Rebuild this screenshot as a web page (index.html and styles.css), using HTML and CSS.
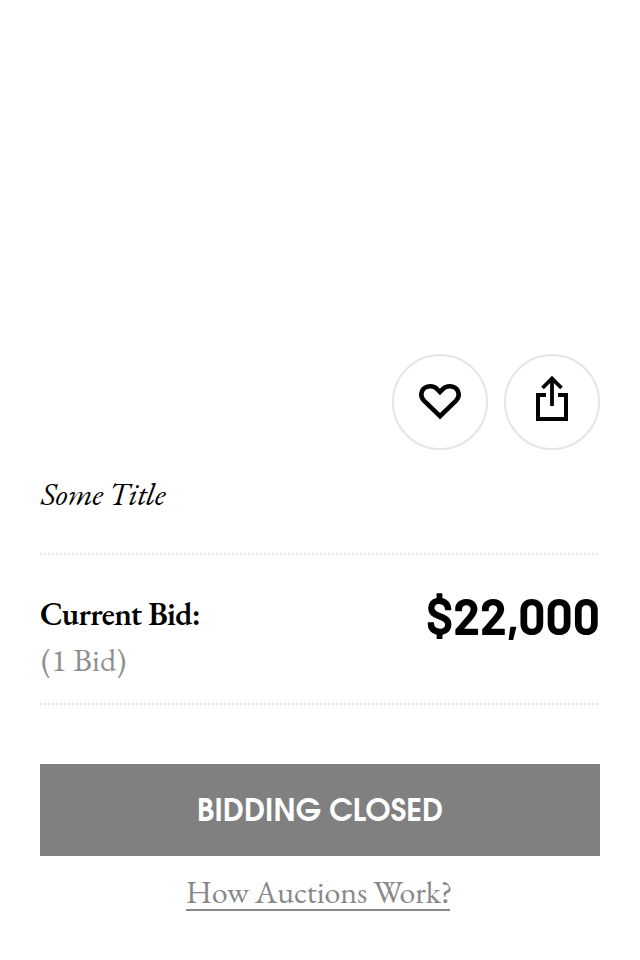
FILE: index.html
```html
<!DOCTYPE html>
<html lang="en">
<head>
<meta charset="utf-8">
<title>Auction</title>
<link rel="stylesheet" href="styles.css">
</head>
<body>
<main class="lot">
  <div class="actions">
    <button class="action" aria-label="Save"><svg width="92" height="92" viewBox="0 0 92 92"><path d="M46 60.2L30.2 44.9C24.5 39 28 30.3 36.3 30.3C39.5 30.3 41.8 31.6 43.3 33.2L46 36L48.7 33.2C50.2 31.6 52.5 30.3 55.7 30.3C64 30.3 67.5 39 61.8 44.9Z" fill="none" stroke="#000" stroke-width="4.6"/></svg></button>
    <button class="action" aria-label="Share"><svg width="92" height="92" viewBox="0 0 92 92"><path d="M40 39H32V63H60V39H52" fill="none" stroke="#000" stroke-width="4"/><path d="M46 50V23M36.5 32L46 22.5L55.5 32" fill="none" stroke="#000" stroke-width="3.8"/></svg></button>
  </div>
  <h1 class="title">Some Title</h1>
  <section class="bid">
    <div class="labels">
      <div class="current">Current Bid:</div>
      <div class="count">(1 Bid)</div>
    </div>
    <svg class="fit price" width="173" height="60"><text x="-1" y="45" textLength="174" lengthAdjust="spacingAndGlyphs">$22,000</text></svg>
  </section>
  <button class="closed"><svg class="fit" width="246" height="46"><text x="0" y="34" textLength="246" lengthAdjust="spacingAndGlyphs">BIDDING CLOSED</text></svg></button>
  <a class="help">How Auctions Work?</a>
</main>
</body>
</html>
```
FILE: styles.css
```css
* { box-sizing: border-box; }
body { margin: 0; background: #fff; color: #000; }
.lot { height: 960px; padding: 354px 40px 0; display: flex; flex-direction: column; font-family: "EB Garamond", "Liberation Serif", serif; font-size: 32px; line-height: 46px; }
.fit { display: block; overflow: visible; }
.fit text { fill: currentColor; }
.actions { display: flex; justify-content: flex-end; gap: 16px; }
.action { width: 96px; height: 96px; padding: 0; border: 2px solid #e5e5e5; border-radius: 50%; background: #fff; }
.action svg { display: block; }
.title { margin: 21px 0 0; padding-left: 1px; height: 82px; font-size: 32px; line-height: 46px; font-weight: 400; font-style: italic; letter-spacing: -0.35px; }
.bid { height: 152px; display: flex; justify-content: space-between; padding-top: 38px; background: repeating-linear-gradient(90deg, #e5e5e5 0 2px, transparent 2px 4px) top / 100% 2px no-repeat, repeating-linear-gradient(90deg, #e5e5e5 0 2px, transparent 2px 4px) bottom / 100% 2px no-repeat; }
.current { font-weight: 600; letter-spacing: -0.65px; }
.count { padding-left: 1px; color: #8f8f8f; letter-spacing: 0.1px; }
.price { margin-top: -1px; font: 700 51px "DIN Next", Barlow, Roboto, sans-serif; }
.closed { height: 92px; margin-top: 59px; padding: 0; display: flex; align-items: center; justify-content: center; border: 0; background: #808080; color: #fff; font: 700 31px "ITC Avant Garde Gothic", "TeX Gyre Adventor", "URW Gothic", Lato, sans-serif; }
.help { align-self: center; height: 39px; width: 264px; margin: 16px 4px 0 0; line-height: 40px; white-space: nowrap; letter-spacing: -0.12px; border-bottom: 2px solid #888; color: #888; }
```
